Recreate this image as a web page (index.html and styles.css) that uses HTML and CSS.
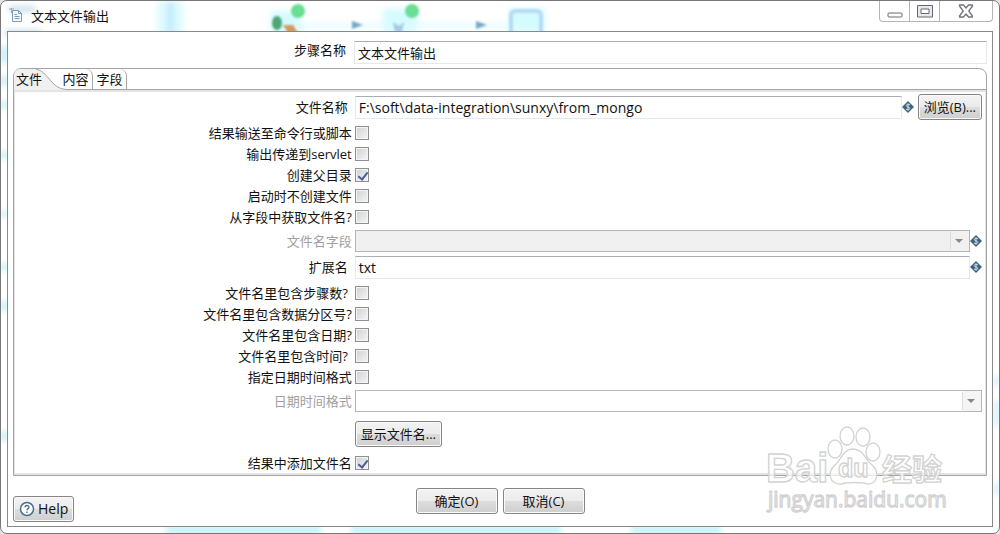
FILE: index.html
```
<!DOCTYPE html>
<html lang="zh-CN">
<head>
  <meta charset="UTF-8">
  <meta name="viewport" content="width=device-width, initial-scale=1.0">
  <title>文本文件输出</title>
  <link rel="stylesheet" href="styles.css">
</head>
<body>
  <!-- Shared icon -->
  <svg width="0" height="0" class="defs" aria-hidden="true">
    <symbol id="variable" viewBox="0 0 12 12">
      <path d="M6 0L12 6L6 12L0 6Z" fill="#41637f"/>
      <path d="M8 4C7 3 4.300 3 4.300 4.600C4.300 6.300 7.800 5.600 7.800 7.400C7.800 9 5 9 4 8M6 2.300V9.700" fill="none" stroke="#d5e0e8" stroke-width="1"/>
    </symbol>
  </svg>

  <div class="window">
    <!-- Blurred desktop behind the glass frame -->
    <svg class="glass" width="1000" height="534" viewBox="0 0 1000 534" aria-hidden="true">
      <defs>
        <filter id="soft" x="0" y="0" width="1000" height="534" filterUnits="userSpaceOnUse"><feGaussianBlur stdDeviation="3"/></filter>
        <filter id="slight" x="0" y="0" width="1000" height="534" filterUnits="userSpaceOnUse"><feGaussianBlur stdDeviation="1"/></filter>
      </defs>
      <g filter="url(#soft)">
        <path d="M156 0H182V36H156Z" fill="#dcfbff"/>
        <path d="M167 0H172V36H167Z" fill="#b9e2fa"/>
        <path d="M8 8H34M4 32H40" stroke="#bfd8e8" stroke-width="5"/>
        <path d="M270 10H300V32H270ZM382 8H416V32H382ZM508 8H544V32H508Z" fill="#d4fbff"/>
        <path d="M290 25H520" stroke="#dffaff" stroke-width="4"/>
        <path d="M3 45V62M3 75V85M3 100V108M3 150V158M3 210V216M3 262V270M3 300V310M3 430V440" stroke="#a9e8fa" stroke-width="5"/>
        <path d="M996 375V385M996 400V425M996 482V494" stroke="#b5ebfb" stroke-width="4"/>
        <path d="M165 529H320M350 529H560M630 529H720" stroke="#a4ebf8" stroke-width="5"/>
      </g>
      <g filter="url(#slight)">
        <ellipse cx="276" cy="22" rx="5" ry="7" fill="#4ea676"/>
        <path d="M282 24L292 24L297 32H287Z" fill="#d59a62"/>
        <circle cx="297" cy="10" r="7" fill="#67df92"/>
        <circle cx="411" cy="10" r="7" fill="#67df92"/>
        <path d="M351 20L362 24L351 28ZM475 20L486 24L475 28Z" fill="#75a8c8"/>
        <path d="M392 21L398 25L403 21L401 31H394Z" fill="#a5cbe9"/>
        <path d="M510 32V15Q510 10 515 10H535Q540 10 540 15V32" fill="none" stroke="#b4daf4" stroke-width="4"/>
      </g>
    </svg>

    <header class="titlebar">
      <svg class="file-icon" width="14" height="16" viewBox="0 0 14 16" aria-hidden="true">
        <path d="M3.500 2.500H9.500L12.500 5.500V13.500H3.500Z" fill="#f4f8fb" stroke="#7c9cb5"/>
        <path d="M9.500 2.500V5.500H12.500M5.500 6.500H8M5.500 8.500H10.500M5.500 10.500H10.500" fill="none" stroke="#7c9cb5"/>
        <path d="M0 1H5M2.500 0V5" stroke="#9aabb6"/>
      </svg>
      <h1>文本文件输出</h1>
      <div class="window-buttons">
        <button type="button" aria-label="最小化">
          <svg width="16" height="14" viewBox="0 0 16 14"><rect x="1" y="9" width="14" height="4" rx="1" fill="#fff" stroke="#686874"/></svg>
        </button>
        <button type="button" aria-label="最大化">
          <svg width="16" height="14" viewBox="0 0 16 14"><path d="M.5 1.500H15.500V13H.5Z" fill="#e9e9ec" stroke="#686874"/><path d="M4 5H12V9.500H4Z" fill="#fff" stroke="#686874"/></svg>
        </button>
        <button type="button" class="close" aria-label="关闭">
          <svg width="16" height="14" viewBox="0 0 16 14"><path d="M1.500 1H5.500L8 4L10.500 1H14.500V2L10.800 7L14.500 12V13H10.500L8 10L5.500 13H1.500V12L5.200 7L1.500 2Z" fill="#fff" stroke="#74747e" stroke-width="1.300" stroke-linejoin="round"/></svg>
        </button>
      </div>
    </header>

    <form class="dialog">
      <div class="row step-row">
        <label for="stepName">步骤名称</label>
        <input type="text" id="stepName" value="文本文件输出">
      </div>

      <section class="folder">
        <div class="tabs" role="tablist">
          <button type="button" role="tab" class="tab selected" aria-selected="true">
            <svg class="tab-shape" width="52" height="21" viewBox="0 0 52 21" aria-hidden="true">
              <path d="M0 21V7Q0 0 7 0H22C34 2 37 20 52 20V21Z" fill="#f0f0f0"/>
              <path d="M22 0C34 2 37 20 52 20.500" fill="none" stroke="#a5a5a5"/>
            </svg>
            <span>文件</span>
          </button>
          <button type="button" role="tab" class="tab" aria-selected="false">内容</button>
          <button type="button" role="tab" class="tab" aria-selected="false">字段</button>
        </div>

        <div class="panel" role="tabpanel">
          <div class="row field-row">
            <label for="fileName" class="inset">文件名称</label>
            <div class="field">
              <input type="text" id="fileName" value="F:\soft\data-integration\sunxy\from_mongo">
              <svg class="variable" width="12" height="12"><use href="#variable"/></svg>
              <button type="button" class="btn browse">浏览(B)...</button>
            </div>
          </div>

          <div class="checks">
            <div class="row"><label for="pipe">结果输送至命令行或脚本</label><input type="checkbox" id="pipe"></div>
            <div class="row"><label for="servlet">输出传递到servlet</label><input type="checkbox" id="servlet"></div>
            <div class="row"><label for="parent">创建父目录</label><input type="checkbox" id="parent" checked></div>
            <div class="row"><label for="noCreate">启动时不创建文件</label><input type="checkbox" id="noCreate"></div>
            <div class="row"><label for="fromField">从字段中获取文件名?</label><input type="checkbox" id="fromField"></div>
          </div>

          <div class="row field-row">
            <label for="nameField" class="disabled">文件名字段</label>
            <div class="field">
              <div class="combo grey"><select id="nameField" disabled><option></option></select></div>
              <svg class="variable" width="12" height="12"><use href="#variable"/></svg>
            </div>
          </div>
          <div class="row field-row">
            <label for="extension" class="inset">扩展名</label>
            <div class="field">
              <input type="text" id="extension" value="txt">
              <svg class="variable" width="12" height="12"><use href="#variable"/></svg>
            </div>
          </div>

          <div class="checks">
            <div class="row"><label for="addStep" class="inset">文件名里包含步骤数?</label><input type="checkbox" id="addStep"></div>
            <div class="row"><label for="addPart">文件名里包含数据分区号?</label><input type="checkbox" id="addPart"></div>
            <div class="row"><label for="addDate">文件名里包含日期?</label><input type="checkbox" id="addDate"></div>
            <div class="row"><label for="addTime" class="inset">文件名里包含时间?</label><input type="checkbox" id="addTime"></div>
            <div class="row"><label for="setFormat">指定日期时间格式</label><input type="checkbox" id="setFormat"></div>
          </div>

          <div class="row field-row">
            <label for="dateFormat" class="disabled">日期时间格式</label>
            <div class="field">
              <div class="combo"><select id="dateFormat" disabled><option></option></select></div>
            </div>
          </div>
          <div class="row show-row">
            <button type="button" class="btn">显示文件名...</button>
          </div>
          <div class="row"><label for="addResult">结果中添加文件名</label><input type="checkbox" id="addResult" checked></div>
        </div>
      </section>

      <footer class="actions">
        <button type="button" class="btn help">
          <svg width="16" height="16" viewBox="0 0 16 16" aria-hidden="true">
            <circle cx="8" cy="8" r="6.500" fill="#fff" stroke="#48708f" stroke-width="1.500"/>
            <path d="M6 6.300C6 4 10 4 10 6.200C10 7.600 8 7.600 8 9.200M8 10.500V12" fill="none" stroke="#48708f" stroke-width="1.400"/>
          </svg>
          Help
        </button>
        <div class="main-actions">
          <button type="button" class="btn">确定(O)</button>
          <button type="button" class="btn">取消(C)</button>
        </div>
      </footer>
    </form>

    <svg class="watermark" width="184" height="92" viewBox="0 0 184 92" role="img" aria-label="Baidu 经验">
      <g fill="#fff" fill-opacity="0.7" stroke="#d2d2d2" stroke-width="1.300">
        <text x="1" y="59" class="mark-latin">Bai</text>
        <text x="117" y="57" class="mark-cjk">经验</text>
        <ellipse cx="70" cy="26" rx="7" ry="9"/>
        <ellipse cx="82" cy="13" rx="7" ry="9"/>
        <ellipse cx="98" cy="14" rx="7" ry="9"/>
        <ellipse cx="108" cy="29" rx="7" ry="9"/>
        <path d="M88 26C98 26 100 36 106 41C116 49 112 62 102 61C96 59 82 59 77 61C65 62 61 50 70 42C77 36 78 26 88 26Z"/>
        <text x="73" y="54" class="mark-du">du</text>
        <text x="3" y="84" class="mark-url">jingyan.baidu.com</text>
      </g>
    </svg>
  </div>
</body>
</html>
```

FILE: styles.css
```
* {
  margin: 0;
  padding: 0;
  box-sizing: border-box;
}

body {
  font-family: "Open Sans", "Noto Sans CJK SC", sans-serif;
  font-size: 13px;
  line-height: 20px;
  color: #111;
  background-color: #e4e4e4;
}

input,
select,
button {
  font: inherit;
  color: inherit;
}

.defs {
  position: absolute;
}

.window {
  position: relative;
  display: flex;
  flex-direction: column;
  min-height: 100vh;
  padding: 0 6px 6px;
  border: 1px solid #777;
  border-radius: 7px;
  background-color: #fff;
  overflow: hidden;
}

.glass {
  position: absolute;
  top: 0;
  left: 0;
}

/* Title bar */
.titlebar {
  position: relative;
  display: flex;
  align-items: flex-start;
  height: 30px;
}

.file-icon {
  margin: 7px 8px 0 2px;
}

.titlebar h1 {
  flex: 1;
  padding-top: 5px;
  font-size: 13px;
  font-weight: normal;
}

.window-buttons {
  display: flex;
  height: 21px;
  border: 1px solid #b5b5b5;
  border-top: none;
  border-radius: 0 0 4px 4px;
  background-color: #fff;
}

.window-buttons button {
  display: flex;
  justify-content: center;
  align-items: center;
  width: 30px;
  border: none;
  border-right: 1px solid #b5b5b5;
  background: none;
}

.window-buttons .close {
  width: 52px;
  border-right: none;
}

/* Dialog */
.dialog {
  position: relative;
  flex: 1;
  display: flex;
  flex-direction: column;
  padding: 8px 5px 4px;
  border: 1px solid #888;
  background-color: #fff;
}

.row {
  display: grid;
  grid-template-columns: 35% 1fr;
  align-items: center;
}

.row label {
  padding-right: 3px;
  text-align: right;
}

.row label.inset {
  padding-right: 7px;
}

.row label.disabled {
  color: #a0a0a0;
}

.step-row label {
  padding-right: 8px;
  padding-bottom: 4px;
}

input[type="text"] {
  width: 100%;
  min-width: 0;
  height: 23px;
  padding: 0 3px;
  border: 1px solid #e3e9ef;
  border-top-color: #abadb3;
  background-color: #fff;
}

.field input[type="text"] {
  font-size: 14px;
}

input[type="checkbox"] {
  appearance: none;
  position: relative;
  width: 14px;
  height: 14px;
  border: 1px solid #8e8f8f;
  background: linear-gradient(135deg, #cdd0d5, #f6f6f6);
  box-shadow: inset 0 0 0 1px #f4f4f4;
}

input[type="checkbox"]:checked::after {
  content: "";
  position: absolute;
  top: 1px;
  left: 4px;
  width: 4px;
  height: 8px;
  border: solid #4a5f97;
  border-width: 0 2px 2px 0;
  transform: rotate(38deg);
}

/* Tabs */
.folder {
  margin-top: 4px;
  border: 1px solid #a5a5a5;
  border-radius: 8px 8px 0 0;
}

.tabs {
  display: flex;
  height: 21px;
  border-bottom: 1px solid #a5a5a5;
}

.tab {
  width: 34px;
  border: none;
  border-right: 1px solid #a5a5a5;
  border-radius: 0 7px 0 0;
  background: none;
}

.tab.selected {
  position: relative;
  width: 45px;
  padding-left: 2px;
  border: none;
  text-align: left;
}

.tab.selected span {
  position: relative;
}

.tab-shape {
  position: absolute;
  top: 0;
  left: 0;
}

.panel {
  padding: 2px 3px 0 2px;
  border: solid #e4e4e4;
  border-width: 2px 1px;
}

.field {
  display: flex;
  align-items: center;
}

.field-row {
  min-height: 26px;
}

.variable {
  flex: none;
}

.browse {
  margin-left: 4px;
}

.combo {
  position: relative;
  flex: 1;
  height: 22px;
  border: 1px solid #b5b5b8;
  background-color: #fff;
}

.combo.grey {
  background-color: #f0f0f0;
}

.combo select {
  display: block;
  width: 100%;
  height: 20px;
  border: none;
  appearance: none;
  background: linear-gradient(#f1f1f1, #f1f1f1) right / 18px 100% no-repeat;
}

.combo::before {
  content: "";
  position: absolute;
  top: 1px;
  bottom: 1px;
  right: 18px;
  border-left: 1px solid #dcdcdc;
}

.combo::after {
  content: "";
  position: absolute;
  top: 8px;
  right: 6px;
  border: 4px solid transparent;
  border-top-color: #888;
  border-bottom: none;
}

.checks {
  padding: 2px 0 1px;
}

.checks .row {
  height: 21px;
}

.show-row {
  padding: 7px 0 6px;
}

.show-row .btn {
  grid-column: 2;
  justify-self: start;
}

/* Buttons */
.btn {
  height: 26px;
  padding: 0 5px;
  border: 1px solid #858585;
  border-radius: 3px;
  background: linear-gradient(#f3f3f3, #ebebeb 50%, #dddddd 50%, #cfcfcf);
  box-shadow: inset 0 0 0 1px #fafafa;
  white-space: nowrap;
}

.actions {
  display: grid;
  grid-template-columns: 1fr auto 1fr;
  margin-top: auto;
}

.help {
  display: flex;
  align-items: center;
  gap: 3px;
  align-self: end;
  justify-self: start;
  font-size: 14px;
}

.main-actions {
  display: flex;
  gap: 5px;
  padding-bottom: 8px;
}

.main-actions .btn {
  width: 82px;
}

/* Watermark */
.watermark {
  position: absolute;
  right: 50px;
  bottom: 18px;
  pointer-events: none;
}

.mark-latin {
  font: bold 40px "Liberation Sans", sans-serif;
}

.mark-du {
  font: bold 25px "Liberation Sans", sans-serif;
}

.mark-cjk {
  font: bold 30px "Noto Sans CJK SC", sans-serif;
}

.mark-url {
  font: 21px "Open Sans", sans-serif;
}
```
